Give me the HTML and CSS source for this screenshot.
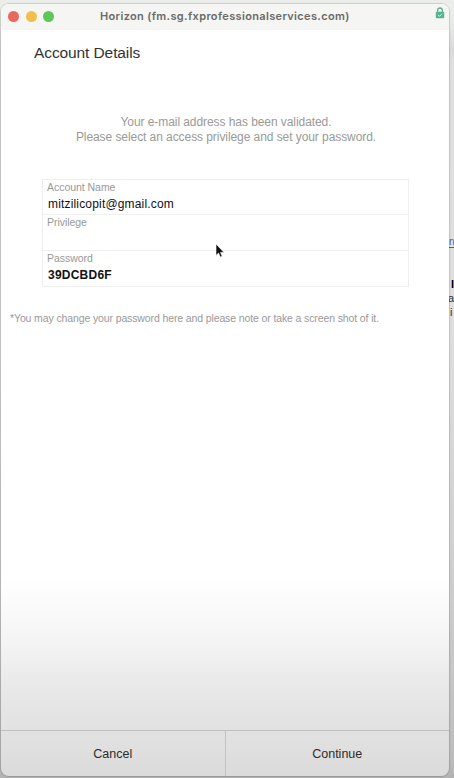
FILE: index.html
```html
<!DOCTYPE html>
<html lang="en">
<head>
<meta charset="utf-8">
<title>Horizon</title>
<link rel="stylesheet" href="styles.css">
</head>
<body>
<div class="backdrop" aria-hidden="true">
  <span class="peek peek-link">n</span>
  <span class="peek peek-bold">I</span>
  <span class="peek peek-a">a</span>
  <span class="peek peek-i">i</span>
</div>
<div class="window">
  <header class="titlebar">
    <div class="lights"><i class="light red"></i><i class="light yellow"></i><i class="light green"></i></div>
    <div class="title">Horizon (fm.sg.fxprofessionalservices.com)</div>
    <svg class="lock" viewBox="0 0 10 12" width="10" height="12">
      <path d="M2.7 5V3.3a2.3 2.3 0 0 1 4.6 0V5" fill="none" stroke="#5cb093" stroke-width="1.3"/>
      <rect x=".8" y="4.7" width="8.4" height="6.6" rx=".8" fill="#5cb093"/>
      <path d="M3 8l1.4 1.4L7.1 6.7" fill="none" stroke="#d3eee3" stroke-width="1"/>
    </svg>
  </header>
  <main class="content">
    <h1 class="heading">Account Details</h1>
    <p class="intro">Your e-mail address has been validated.<br>Please select an access privilege and set your password.</p>
    <div class="form">
      <div class="field"><label class="label">Account Name</label><div class="value">mitzilicopit@gmail.com</div></div>
      <div class="field"><label class="label">Privilege</label></div>
      <div class="field"><label class="label">Password</label><div class="value strong">39DCBD6F</div></div>
    </div>
    <p class="note">*You may change your password here and please note or take a screen shot of it.</p>
  </main>
  <footer class="actions">
    <button class="action">Cancel</button>
    <button class="action">Continue</button>
  </footer>
</div>
<svg class="cursor" viewBox="0 0 10 16" width="10" height="16">
  <path d="M1 1v11.4l2.6-2.3 1.7 4 1.9-.8-1.7-3.9H9z" fill="#111" stroke="#fff" stroke-width=".6"/>
</svg>
</body>
</html>
```

FILE: styles.css
```css
* { box-sizing: border-box; }
html, body { height: 100%; }
body {
  margin: 0;
  padding: 4px 5px 2px 1px;
  overflow: hidden;
  position: relative;
  font-family: "Liberation Sans", Arial, sans-serif;
  background: linear-gradient(#eceeec 0, #e9ebe9 22px, #d9d9d9 50px, #dfdfdf 60px, #dedede 330px, #cdcdcd 600px, #bdbdbd 760px, #b2b2b2 778px);
}
.backdrop { position: absolute; inset: 0; overflow: hidden; }
.peek { position: absolute; left: 450px; font-size: 11px; line-height: 12px; color: #333; }
.peek-link { top: 237px; left: 449px; font-size: 10px; color: #3a6cc0; border-bottom: 1px solid #3f66a8; line-height: 10px; }
.peek-bold { top: 278px; left: 451px; font-weight: bold; color: #000; }
.peek-a { top: 292px; left: 448px; }
.peek-i { top: 306px; }
.window {
  position: relative;
  height: 100%;
  display: flex;
  flex-direction: column;
  border-radius: 8px;
  overflow: hidden;
  background: linear-gradient(#fff 0, #fff 574px, #f4f4f4 638px, #eaeaea 676px, #e2e2e2 726px, #dbdbdb 772px);
  box-shadow: 0 0 1px 1px rgba(0, 0, 0, .14);
}
.titlebar {
  flex: 0 0 26px;
  display: flex;
  align-items: center;
  padding: 0 4px 2px 7px;
  background: #f5f5f3;
}
.lights { display: flex; gap: 6.5px; width: 92px; }
.light { width: 11px; height: 11px; border-radius: 50%; }
.red { background: #e5695f; }
.yellow { background: #efbf50; }
.green { background: #5cc858; }
.title {
  flex: 1;
  font: 600 11px/14px Inter, sans-serif;
  letter-spacing: .35px;
  color: #6a6a68;
  white-space: nowrap;
}
.lock { align-self: flex-start; margin-top: 3px; }
.content { flex: 1; }
.heading {
  margin: 14px 0 0 33px;
  font-size: 15.5px;
  line-height: 18px;
  font-weight: normal;
  letter-spacing: -.1px;
  color: #333;
}
.intro {
  margin: 53px 0 0 2px;
  text-align: center;
  font-size: 12px;
  line-height: 15px;
  letter-spacing: -.07px;
  color: #999;
}
.form {
  width: 367px;
  margin: 34px 0 0 41px;
  border: 1px solid #eee;
}
.field { height: 35px; padding: 1px 4px 0; }
.field + .field { height: 36px; border-top: 1px solid #eee; }
.field:first-child { height: 34px; }
.label { display: block; font-size: 10.5px; line-height: 13px; letter-spacing: -.04px; color: #999; }
.value { margin: 3px 0 0 1px; font-size: 12px; line-height: 14px; letter-spacing: .17px; color: #111; }
.strong { letter-spacing: .23px; font-weight: bold; }
.note {
  margin: 25px 0 0 9px;
  font-size: 10.5px;
  line-height: 13px;
  letter-spacing: -.12px;
  color: #999;
  white-space: nowrap;
}
.actions { display: flex; flex: 0 0 46px; border-top: 1px solid #bfbfbf; }
.action {
  flex: 1;
  border: 0;
  padding: 0;
  background: none;
  font: 12.5px "Liberation Sans", Arial, sans-serif;
  color: #2c2c2c;
}
.action + .action { border-left: 1px solid #c2c2c2; }
.cursor { position: absolute; left: 215px; top: 243px; }
```
